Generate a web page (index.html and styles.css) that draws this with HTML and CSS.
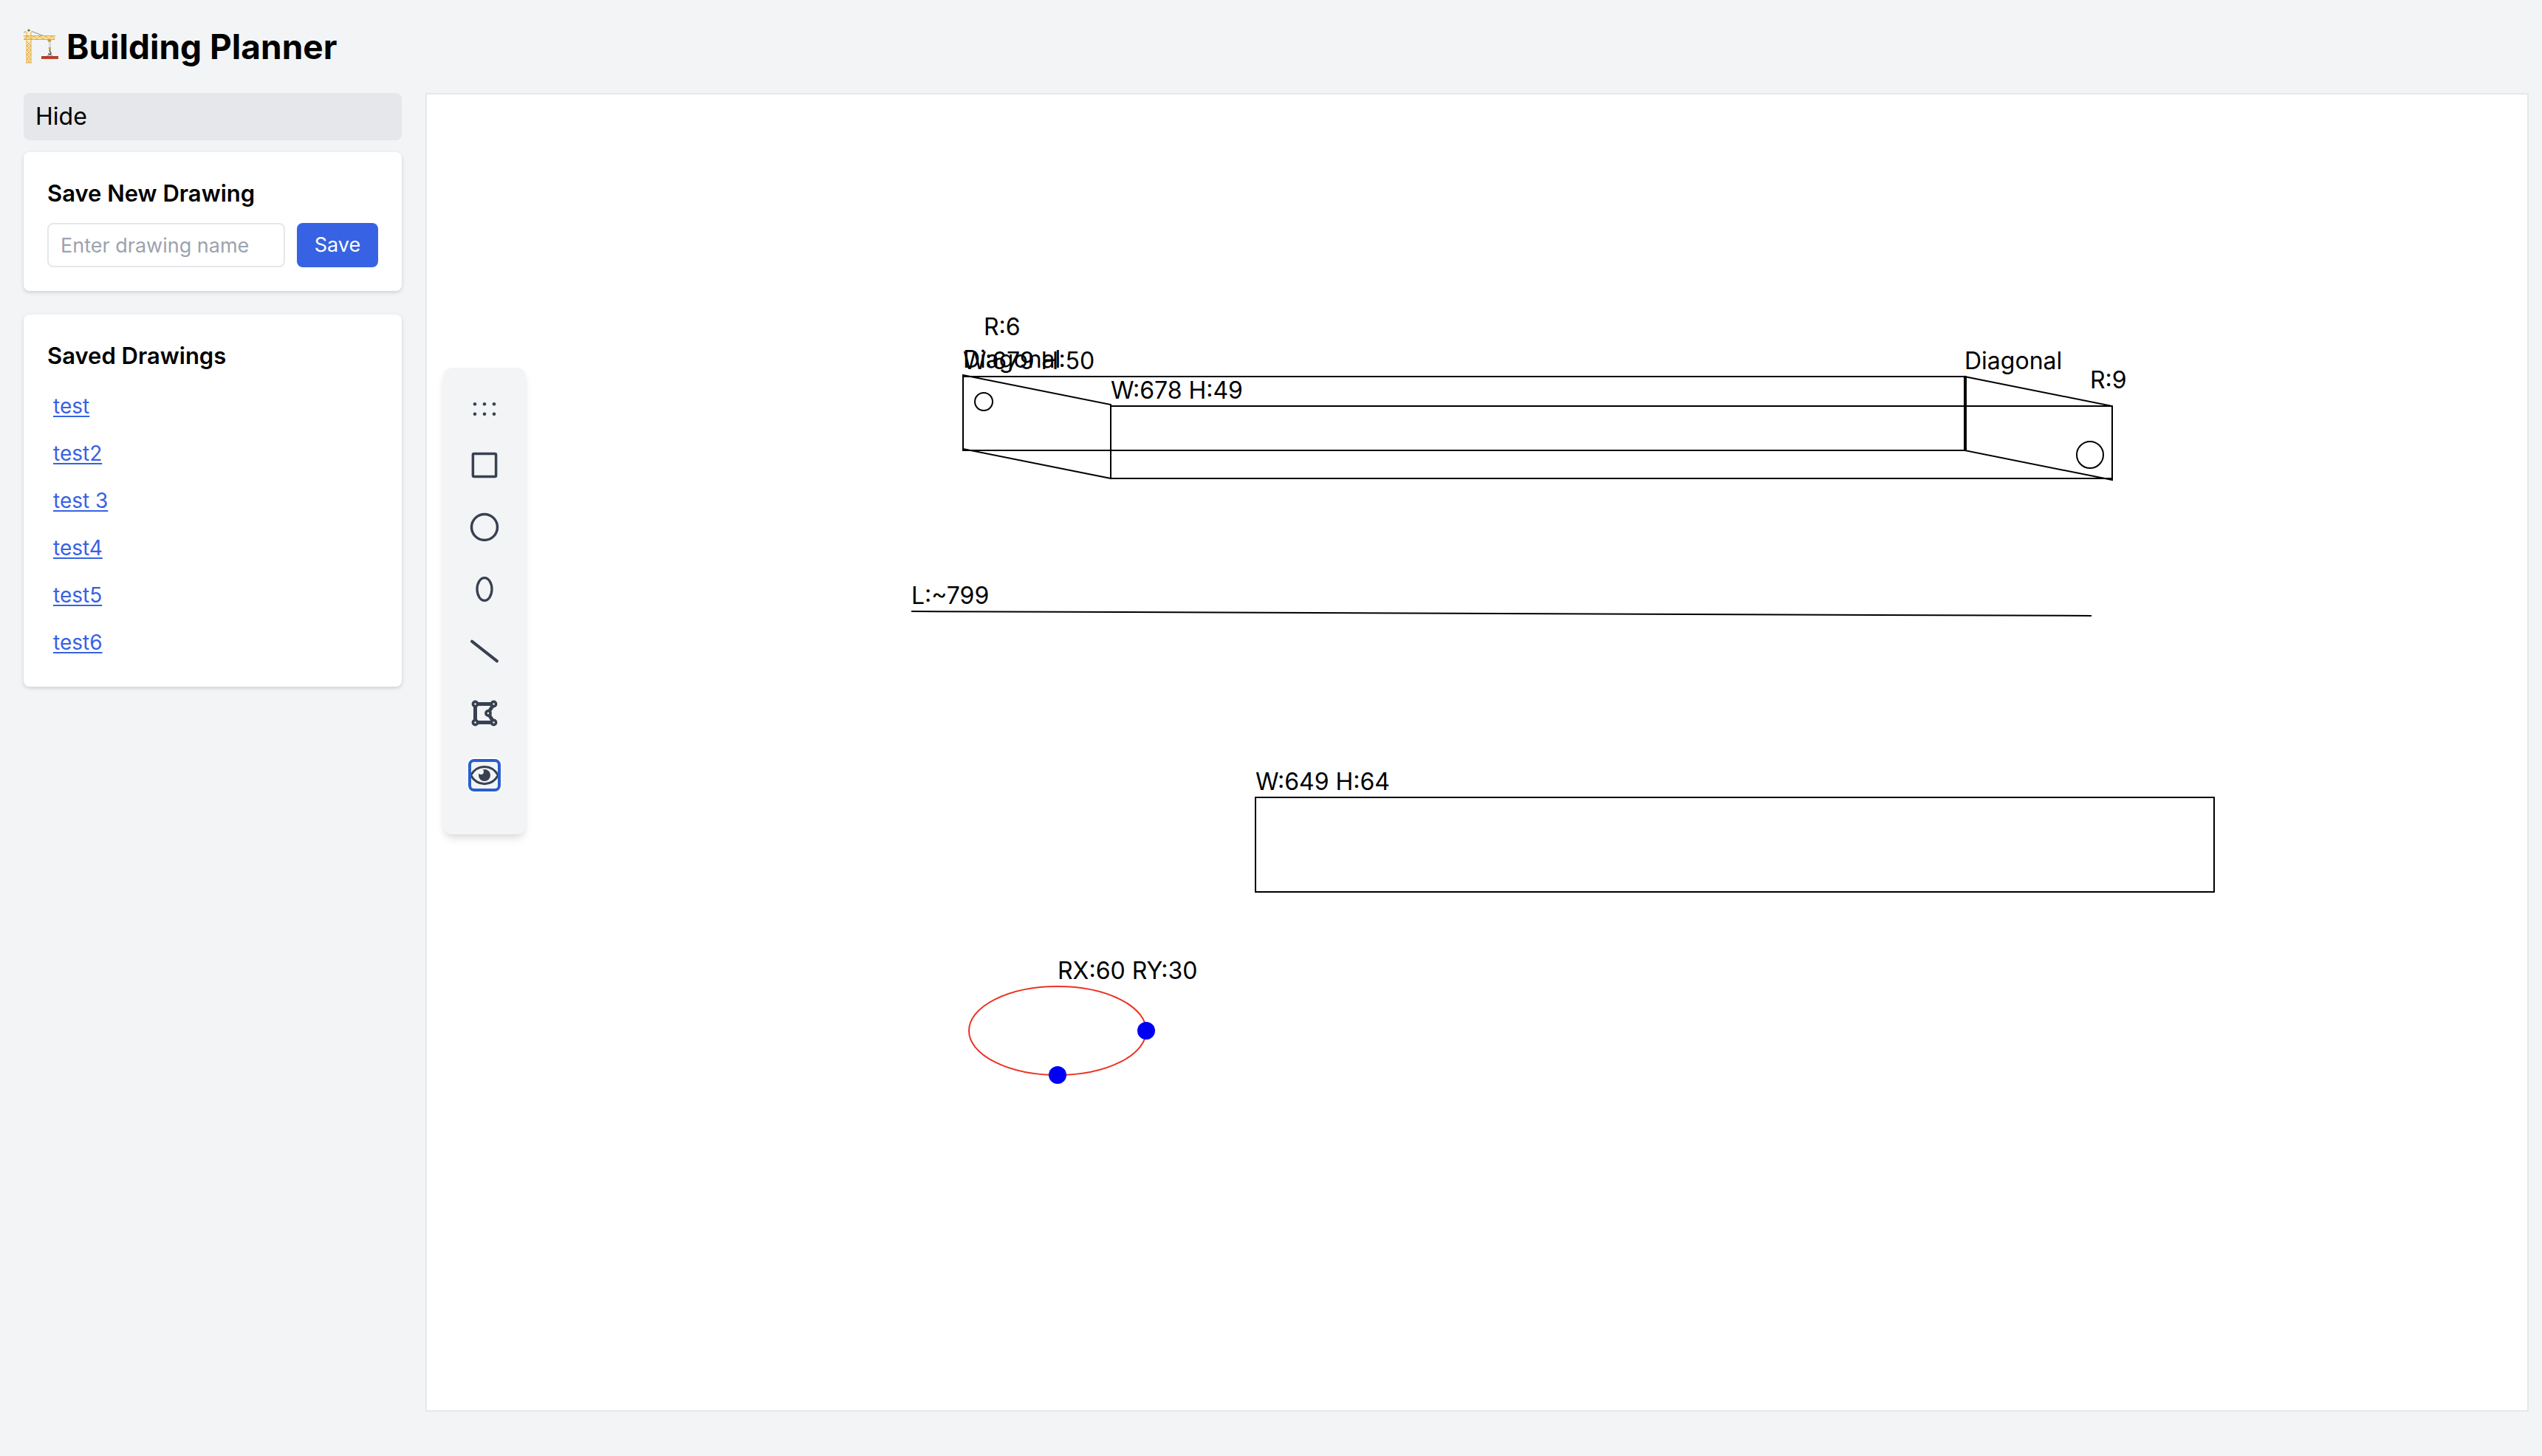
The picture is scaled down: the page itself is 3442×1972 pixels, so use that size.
FILE: index.html
```html
<!DOCTYPE html>
<html lang="en">
<head>
  <meta charset="utf-8">
  <meta name="viewport" content="width=device-width, initial-scale=1">
  <title>Building Planner</title>
  <link rel="stylesheet" href="styles.css">
</head>
<body>
  <header class="header">
    <svg class="logo" viewBox="0 0 48 48" aria-hidden="true">
      <path d="M0 5 L7 2 L36 13" fill="none" stroke="#8b8d8f" stroke-width="1"/>
      <path d="M3 47 V3 L7 1 L11 3 V47 Z" fill="#fbeecb"/>
      <path d="M0 9 H43 V13 L41 15 H0 Z" fill="#f9e3a6"/>
      <path d="M4 46 V4 M10 46 V4 M4 17 L10 23 L4 29 L10 35 L4 41 L9 46 M10 17 L4 23 L10 29 L4 35 L10 41 L5 46 M4 23 H10 M4 29 H10 M4 35 H10 M4 41 H10 M3 46 H11" fill="none" stroke="#e2b04a" stroke-width="1"/>
      <path d="M0 9.500 H43 M0 14.500 H42 M1 14 L5 10 L10 14 L14 10 L18 14 L22 10 L26 14 L30 10 L34 14 L38 10 L42 14" fill="none" stroke="#e0aa3c" stroke-width="1"/>
      <circle cx="7" cy="2" r="1.500" fill="#6b6220"/>
      <path d="M32 15 H38 L36 18 H34 Z" fill="#c99a3a"/>
      <path d="M34.500 18 V26 M36.500 18 V26" stroke="#c9cbcd" stroke-width="1"/>
      <path d="M34 25 H37 V29 H34 Z" fill="#c8a83a"/>
      <path d="M35.500 29 V31 C38 32 37 35 35.500 35 C34 35 34 34 34 33" fill="none" stroke="#3c4248" stroke-width="1.300"/>
      <path d="M24 37 H47 V41 H24 Z" fill="#c9452b"/>
      <path d="M24 38 H47" stroke="#8e2f20" stroke-width="1"/>
      <path d="M35.500 34 L29 40 M35.500 34 L42 40" stroke="#6e5550" stroke-width="1"/>
    </svg>
    <h1 class="title">Building Planner</h1>
  </header>

  <div class="layout">
    <aside class="sidebar">
      <button class="hide-button" type="button">Hide</button>
      <div class="cards">
        <section class="card">
          <h2 class="card-title"><label for="drawing-name">Save New Drawing</label></h2>
          <form class="save-form">
            <input class="name-input" id="drawing-name" type="text" placeholder="Enter drawing name">
            <button class="save-button" type="button">Save</button>
          </form>
        </section>
        <section class="card">
          <h2 class="card-title">Saved Drawings</h2>
          <ul class="drawings">
            <li><a class="drawing-link" href="#test">test</a></li>
            <li><a class="drawing-link" href="#test2">test2</a></li>
            <li><a class="drawing-link" href="#test3">test 3</a></li>
            <li><a class="drawing-link" href="#test4">test4</a></li>
            <li><a class="drawing-link" href="#test5">test5</a></li>
            <li><a class="drawing-link" href="#test6">test6</a></li>
          </ul>
        </section>
      </div>
    </aside>

    <main class="canvas">
      <svg class="drawing" role="img" aria-label="Drawing canvas">
        <g class="shape">
          <rect x="726" y="382" width="1358" height="100"/>
          <rect x="926" y="422" width="1356" height="98"/>
          <path d="M726 380 L926 420 V520 L726 480 Z"/>
          <path d="M2082 382 L2282 422 V522 L2082 482 Z"/>
          <circle cx="754" cy="416" r="12"/>
          <circle cx="2252" cy="488" r="18"/>
          <path d="M656 700 L2254 706"/>
          <rect x="1122" y="952" width="1298" height="128"/>
        </g>
        <ellipse class="shape shape-selected" cx="854" cy="1268" rx="120" ry="60"/>
        <circle class="grip" cx="974" cy="1268" r="12"/>
        <circle class="grip" cx="854" cy="1328" r="12"/>
        <g class="measure">
          <text x="754" y="326">R:6</text>
          <text x="726" y="372">W:679 H:50</text>
          <text x="726" y="370">Diagonal</text>
          <text x="926" y="412">W:678 H:49</text>
          <text x="2082" y="372">Diagonal</text>
          <text x="2252" y="398">R:9</text>
          <text x="656" y="690">L:~799</text>
          <text x="1122" y="942">W:649 H:64</text>
          <text x="854" y="1198">RX:60 RY:30</text>
        </g>
      </svg>

      <div class="toolbar" role="toolbar" aria-label="Drawing tools">
        <svg class="icon drag-handle" viewBox="0 0 40 40" aria-hidden="true">
          <g fill="currentColor">
            <circle cx="7" cy="13.300" r="2.300"/><circle cx="20" cy="13.300" r="2.300"/><circle cx="33" cy="13.300" r="2.300"/>
            <circle cx="7" cy="26.700" r="2.300"/><circle cx="20" cy="26.700" r="2.300"/><circle cx="33" cy="26.700" r="2.300"/>
          </g>
        </svg>
        <div class="tools">
          <button class="tool" type="button" aria-label="Rectangle">
            <svg class="icon" viewBox="0 0 40 40"><rect x="4.400" y="4.400" width="31.200" height="31.200" rx="1.500" fill="none" stroke="currentColor" stroke-width="3.500"/></svg>
          </button>
          <button class="tool" type="button" aria-label="Circle">
            <svg class="icon" viewBox="0 0 40 40"><circle cx="20" cy="20" r="17.500" fill="none" stroke="currentColor" stroke-width="3.500"/></svg>
          </button>
          <button class="tool" type="button" aria-label="Ellipse">
            <svg class="icon" viewBox="0 0 40 40"><ellipse cx="20" cy="20" rx="10" ry="15.300" fill="none" stroke="currentColor" stroke-width="3.300"/></svg>
          </button>
          <button class="tool" type="button" aria-label="Line">
            <svg class="icon" viewBox="0 0 40 40"><path d="M3 6.700 L37 33.300" fill="none" stroke="currentColor" stroke-width="4" stroke-linecap="round"/></svg>
          </button>
          <button class="tool" type="button" aria-label="Polygon">
            <svg class="icon" viewBox="0 0 40 40">
              <path d="M29 7.500 H7.500 V32.500 H29 M31.500 9.500 L26 18 M26 22 L31.500 30.500" fill="none" stroke="currentColor" stroke-width="5"/>
              <g fill="#f3f4f6" stroke="currentColor" stroke-width="3.600">
                <circle cx="7.500" cy="7.500" r="3.100"/><circle cx="32.500" cy="7.500" r="3.100"/>
                <circle cx="7.500" cy="32.500" r="3.100"/><circle cx="32.500" cy="32.500" r="3.100"/>
                <circle cx="25" cy="20" r="3.100"/>
              </g>
            </svg>
          </button>
          <button class="tool tool-active" type="button" aria-label="Preview" aria-pressed="true">
            <svg class="icon" viewBox="0 0 40 40">
              <path d="M1.500 20 C10 4.500 30 4.500 38.500 20 C30 35.500 10 35.500 1.500 20 Z" fill="none" stroke="currentColor" stroke-width="3"/>
              <circle cx="20" cy="20" r="8" fill="currentColor"/>
              <circle cx="15.300" cy="15.300" r="3.700" fill="#f3f4f6"/>
            </svg>
          </button>
        </div>
      </div>
    </main>
  </div>
</body>
</html>
```

FILE: styles.css
```css
*,
*::before,
*::after {
  box-sizing: border-box;
}

body {
  display: flex;
  flex-direction: column;
  min-height: 100vh;
  margin: 0;
  padding: 31px 18px 60px 32px;
  background: #f3f4f6;
  color: #000;
  font-family: Inter, "Liberation Sans", sans-serif;
  font-size: 32px;
  line-height: 48px;
}

button,
input {
  font: inherit;
}

.header {
  display: flex;
  align-items: center;
  gap: 10px;
  margin-bottom: 31px;
}

.logo {
  width: 48px;
  height: 48px;
}

.title {
  margin: 0;
  font-size: 46px;
  font-weight: 700;
  line-height: 64px;
}

.layout {
  display: flex;
  flex: 1;
  gap: 32px;
}

.sidebar {
  flex: none;
  width: 512px;
}

.hide-button {
  display: block;
  width: 100%;
  margin-bottom: 16px;
  padding: 8px 16px;
  border: 0;
  border-radius: 8px;
  background: #e5e7eb;
  color: inherit;
  text-align: left;
}

.cards {
  display: flex;
  flex-direction: column;
  gap: 32px;
}

.card {
  padding: 32px;
  border-radius: 8px;
  background: #fff;
  box-shadow: 0 2px 6px rgba(0, 0, 0, 0.1), 0 2px 4px rgba(0, 0, 0, 0.06);
}

.card-title {
  margin: 0 0 16px;
  font-size: 31px;
  font-weight: 600;
}

.save-form {
  display: flex;
  gap: 16px;
  font-size: 27px;
  line-height: 40px;
}

.name-input {
  flex: 1;
  min-width: 0;
  height: 60px;
  padding: 8px 16px;
  border: 2px solid #e5e7eb;
  border-radius: 8px;
  background: #fff;
}

.name-input::placeholder {
  color: #9ca3af;
  opacity: 1;
}

.save-button {
  width: 110px;
  padding: 0;
  border: 0;
  border-radius: 8px;
  background: #3762e3;
  color: #fff;
}

.drawings {
  display: flex;
  flex-direction: column;
  gap: 8px;
  margin: 0;
  padding: 0;
  list-style: none;
  font-size: 28px;
  line-height: 40px;
}

.drawing-link {
  display: block;
  padding: 8px;
  color: #3762e3;
  text-decoration-thickness: 2px;
  text-underline-offset: 3px;
}

.canvas {
  position: relative;
  flex: 1;
  min-width: 0;
  border: 2px solid #e5e7eb;
  background: #fff;
}

.drawing {
  position: absolute;
  inset: 0;
  width: 100%;
  height: 100%;
}

.shape {
  fill: none;
  stroke: #000;
  stroke-width: 2px;
}

.shape-selected {
  stroke: #eb3323;
}

.grip {
  fill: #0000f5;
}

.measure {
  font-size: 32px;
}

.toolbar {
  position: absolute;
  top: 370px;
  left: 22px;
  display: flex;
  flex-direction: column;
  align-items: center;
  gap: 36px;
  width: 112px;
  padding: 36px 0 60px;
  border-radius: 12px;
  background: #f3f4f6;
  color: #374151;
  box-shadow: 0 8px 12px -2px rgba(0, 0, 0, 0.1), 0 4px 8px -2px rgba(0, 0, 0, 0.06);
}

.tools {
  display: flex;
  flex-direction: column;
  gap: 44px;
}

.tool {
  width: 40px;
  height: 40px;
  padding: 0;
  border: 0;
  background: none;
  color: inherit;
}

.tool-active {
  border-radius: 6px;
  outline: 4px solid #2860cc;
  outline-offset: -2px;
  box-shadow: 0 0 0 4px #fff;
}

.icon {
  display: block;
  width: 40px;
  height: 40px;
}
```
